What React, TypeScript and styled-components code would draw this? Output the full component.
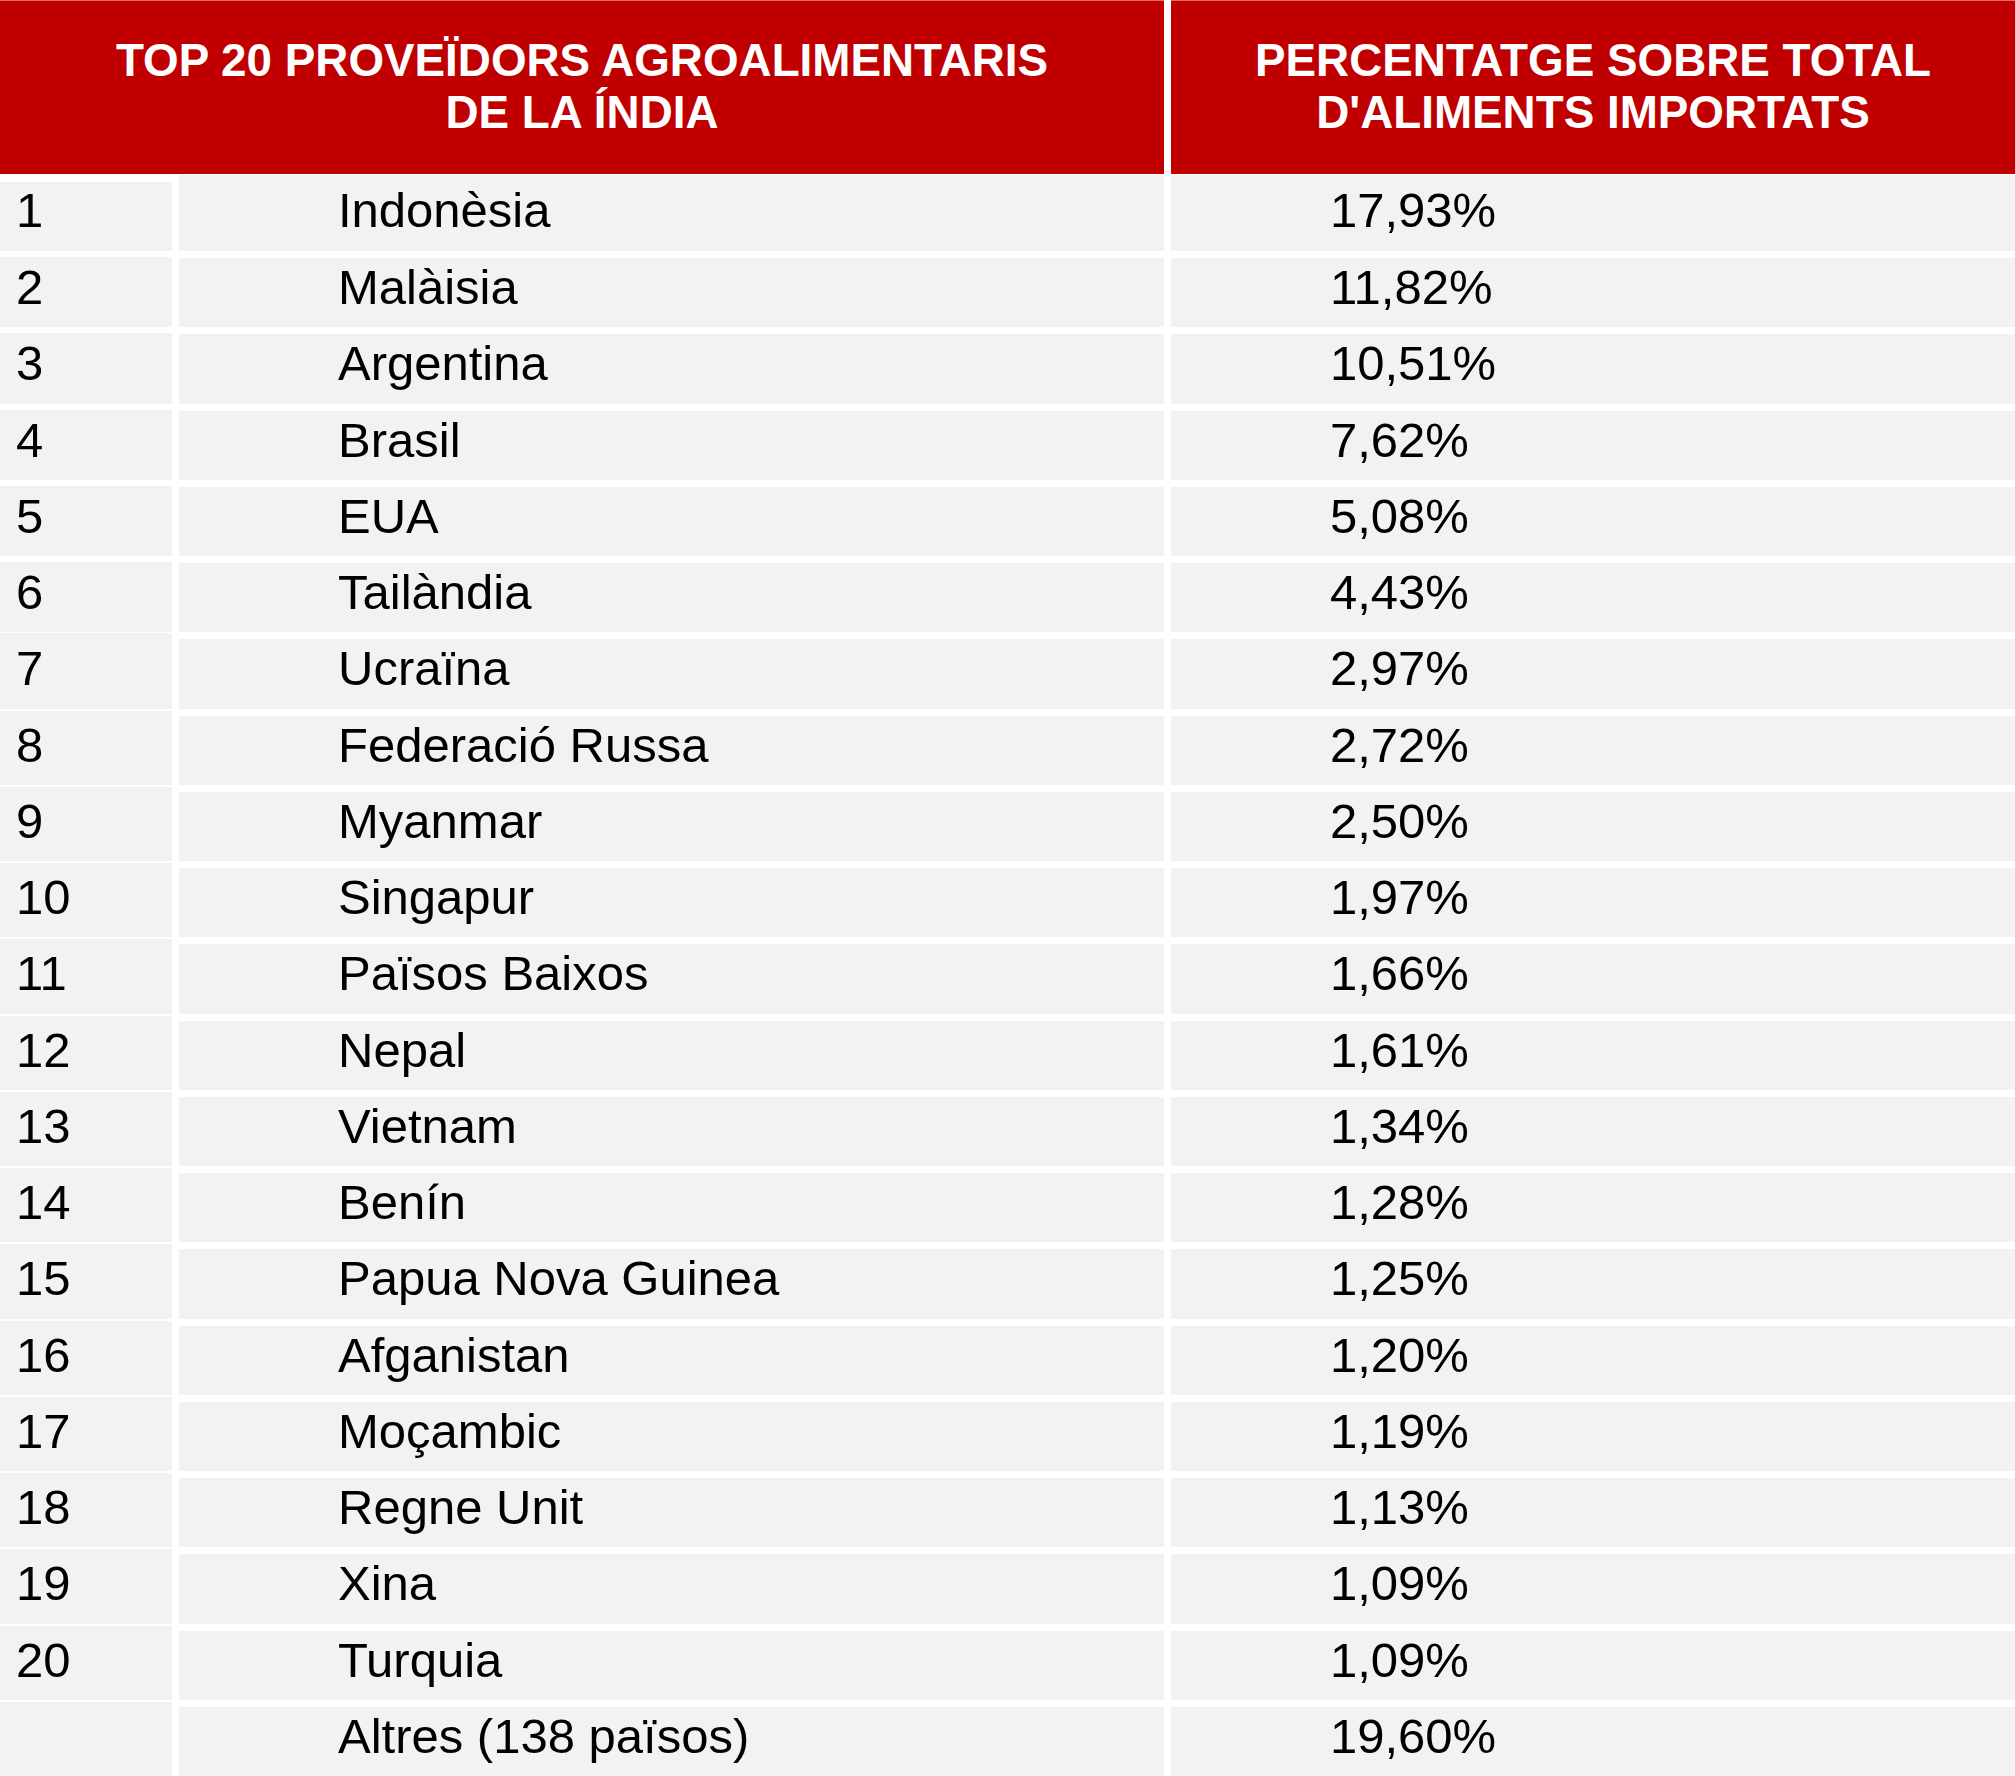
import styled, { createGlobalStyle } from 'styled-components'

const Suppliers = [
  { rank: '1', country: 'Indonèsia', share: '17,93%' },
  { rank: '2', country: 'Malàisia', share: '11,82%' },
  { rank: '3', country: 'Argentina', share: '10,51%' },
  { rank: '4', country: 'Brasil', share: '7,62%' },
  { rank: '5', country: 'EUA', share: '5,08%' },
  { rank: '6', country: 'Tailàndia', share: '4,43%' },
  { rank: '7', country: 'Ucraïna', share: '2,97%' },
  { rank: '8', country: 'Federació Russa', share: '2,72%' },
  { rank: '9', country: 'Myanmar', share: '2,50%' },
  { rank: '10', country: 'Singapur', share: '1,97%' },
  { rank: '11', country: 'Països Baixos', share: '1,66%' },
  { rank: '12', country: 'Nepal', share: '1,61%' },
  { rank: '13', country: 'Vietnam', share: '1,34%' },
  { rank: '14', country: 'Benín', share: '1,28%' },
  { rank: '15', country: 'Papua Nova Guinea', share: '1,25%' },
  { rank: '16', country: 'Afganistan', share: '1,20%' },
  { rank: '17', country: 'Moçambic', share: '1,19%' },
  { rank: '18', country: 'Regne Unit', share: '1,13%' },
  { rank: '19', country: 'Xina', share: '1,09%' },
  { rank: '20', country: 'Turquia', share: '1,09%' },
  { rank: '', country: 'Altres (138 països)', share: '19,60%' },
]

// the rank column has thicker separators only for the first rows
const rankGap = (index: number) => {
  if (index === 0) return 8
  if (index < 6) return 6
  if (index === 6) return 1
  return 2
}

const App = () => {
  return (
    <>
      <GlobalStyle />
      <Table>
        <HeaderRow>
          <HeaderCell>
            TOP 20 PROVEÏDORS AGROALIMENTARIS
            <br />
            DE LA ÍNDIA
          </HeaderCell>
          <HeaderCell>
            PERCENTATGE SOBRE TOTAL
            <br />
            D'ALIMENTS IMPORTATS
          </HeaderCell>
        </HeaderRow>
        {Suppliers.map((item, index) => (
          <Row key={index} $first={index === 0}>
            <Cell $gap={rankGap(index)} $indent={16}>{item.rank}</Cell>
            <Cell $gap={index === 0 ? 1 : 7} $indent={159}>{item.country}</Cell>
            <Cell $gap={index === 0 ? 1 : 7} $indent={159}>{item.share}</Cell>
          </Row>
        ))}
      </Table>
    </>
  )
}

const GlobalStyle = createGlobalStyle`
  html, body {
    margin: 0;
    padding: 0;
    background: #ffffff;
  }
  body {
    font-family: "Liberation Sans", Arial, sans-serif;
    overflow: hidden;
  }
`

const Table = styled.div`
  width: 2015px;
  display: flex;
  flex-direction: column;
  background: #ffffff;
`

const HeaderRow = styled.div`
  display: grid;
  grid-template-columns: 1164px 844px;
  column-gap: 7px;
  height: 174px;
`

const HeaderCell = styled.div`
  background: #c00000;
  color: #ffffff;
  font-weight: 700;
  font-size: 45.8px;
  line-height: 52px;
  text-align: center;
  display: flex;
  align-items: center;
  justify-content: center;
  box-shadow: inset 0 1px 0 #e07070;
`

const Row = styled.div<{ $first?: boolean }>`
  display: grid;
  grid-template-columns: 172px 985px 844px;
  column-gap: 7px;
  height: ${p => (p.$first ? '77px' : '76.25px')};
`

const Cell = styled.div<{ $gap: number; $indent: number }>`
  background: #f2f2f2;
  box-shadow: inset 0 ${p => p.$gap}px 0 #ffffff;
  padding: 8px 0 0 ${p => p.$indent}px;
  font-size: 49px;
  line-height: 56px;
  color: #000000;
  white-space: nowrap;
`

export default App
